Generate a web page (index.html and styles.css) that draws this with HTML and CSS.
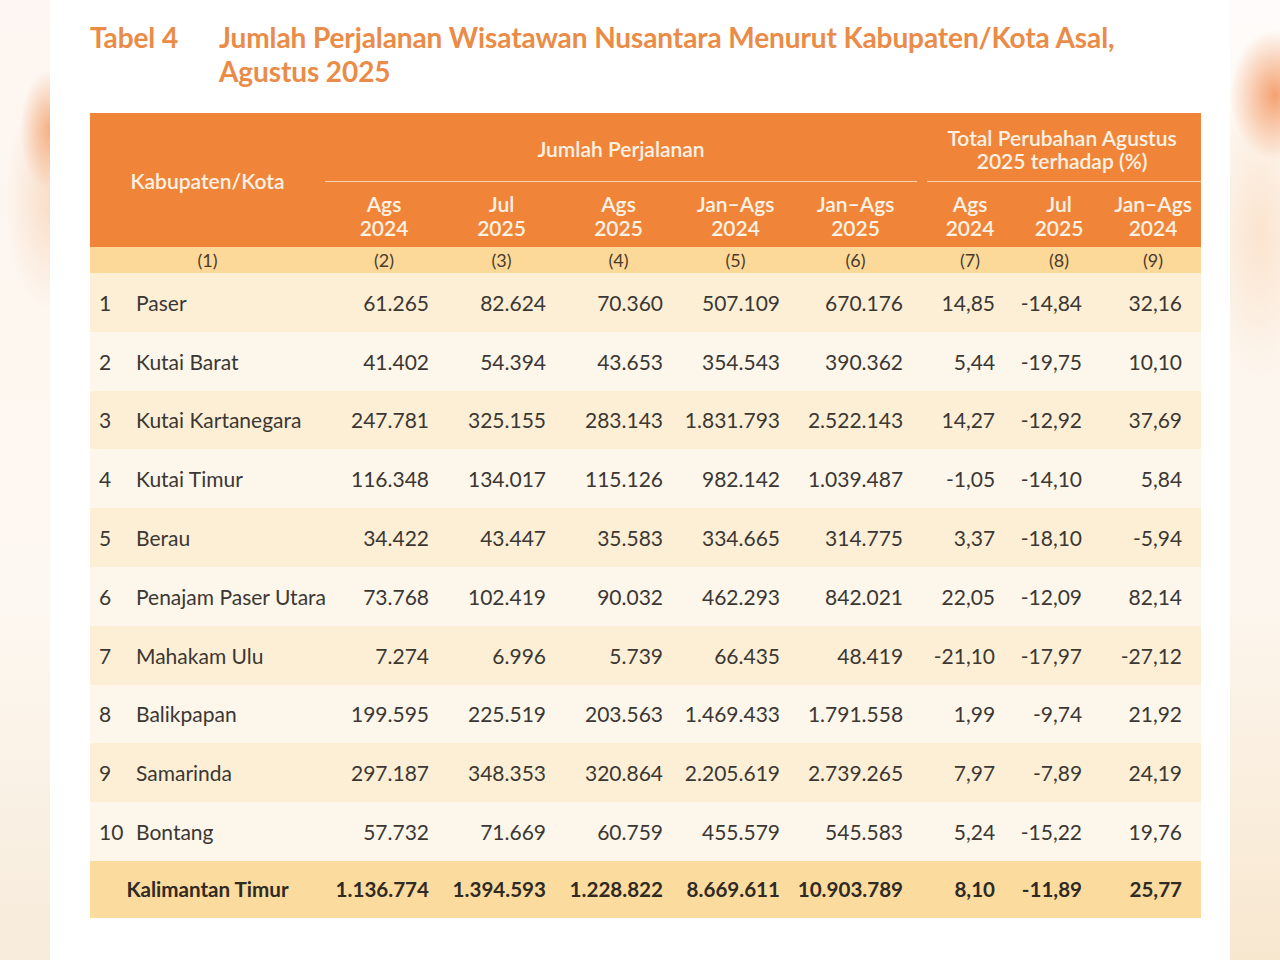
FILE: index.html
```html
<!DOCTYPE html>
<html lang="id">
<head>
<meta charset="utf-8">
<title>Tabel 4</title>
<link rel="stylesheet" href="styles.css">
</head>
<body>
<div class="edge edge-left"></div>
<main class="page">
  <h1 class="title">
    <span class="title-num">Tabel 4</span>
    <span class="title-text">Jumlah Perjalanan Wisatawan Nusantara Menurut Kabupaten/Kota Asal, Agustus 2025</span>
  </h1>
  <table class="data">
    <colgroup>
      <col class="w-no"><col class="w-name">
      <col class="w-c2"><col class="w-c3"><col class="w-c4"><col class="w-c5"><col class="w-c6">
      <col class="w-c7"><col class="w-c8"><col class="w-c9">
    </colgroup>
    <thead>
      <tr class="h1">
        <th colspan="2" rowspan="2" class="h-kab">Kabupaten/Kota</th>
        <th colspan="5" class="h-group"><div class="grp grp-a">Jumlah Perjalanan</div></th>
        <th colspan="3" class="h-group"><div class="grp grp-b">Total Perubahan Agustus<br>2025 terhadap (%)</div></th>
      </tr>
      <tr class="h2">
        <th>Ags<br>2024</th>
        <th>Jul<br>2025</th>
        <th>Ags<br>2025</th>
        <th>Jan–Ags<br>2024</th>
        <th>Jan–Ags<br>2025</th>
        <th class="p7">Ags<br>2024</th>
        <th class="p8">Jul<br>2025</th>
        <th class="p9">Jan–Ags<br>2024</th>
      </tr>
      <tr class="h3">
        <th colspan="2">(1)</th>
        <th>(2)</th><th>(3)</th><th>(4)</th><th>(5)</th><th>(6)</th>
        <th class="p7">(7)</th><th class="p8">(8)</th><th class="p9">(9)</th>
      </tr>
    </thead>
    <tbody>
      <tr><td class="no">1</td><td class="name">Paser</td><td>61.265</td><td>82.624</td><td>70.360</td><td>507.109</td><td>670.176</td><td class="p7">14,85</td><td class="p8">-14,84</td><td class="p9">32,16</td></tr>
      <tr><td class="no">2</td><td class="name">Kutai Barat</td><td>41.402</td><td>54.394</td><td>43.653</td><td>354.543</td><td>390.362</td><td class="p7">5,44</td><td class="p8">-19,75</td><td class="p9">10,10</td></tr>
      <tr><td class="no">3</td><td class="name">Kutai Kartanegara</td><td>247.781</td><td>325.155</td><td>283.143</td><td>1.831.793</td><td>2.522.143</td><td class="p7">14,27</td><td class="p8">-12,92</td><td class="p9">37,69</td></tr>
      <tr><td class="no">4</td><td class="name">Kutai Timur</td><td>116.348</td><td>134.017</td><td>115.126</td><td>982.142</td><td>1.039.487</td><td class="p7">-1,05</td><td class="p8">-14,10</td><td class="p9">5,84</td></tr>
      <tr><td class="no">5</td><td class="name">Berau</td><td>34.422</td><td>43.447</td><td>35.583</td><td>334.665</td><td>314.775</td><td class="p7">3,37</td><td class="p8">-18,10</td><td class="p9">-5,94</td></tr>
      <tr><td class="no">6</td><td class="name">Penajam Paser Utara</td><td>73.768</td><td>102.419</td><td>90.032</td><td>462.293</td><td>842.021</td><td class="p7">22,05</td><td class="p8">-12,09</td><td class="p9">82,14</td></tr>
      <tr><td class="no">7</td><td class="name">Mahakam Ulu</td><td>7.274</td><td>6.996</td><td>5.739</td><td>66.435</td><td>48.419</td><td class="p7">-21,10</td><td class="p8">-17,97</td><td class="p9">-27,12</td></tr>
      <tr><td class="no">8</td><td class="name">Balikpapan</td><td>199.595</td><td>225.519</td><td>203.563</td><td>1.469.433</td><td>1.791.558</td><td class="p7">1,99</td><td class="p8">-9,74</td><td class="p9">21,92</td></tr>
      <tr><td class="no">9</td><td class="name">Samarinda</td><td>297.187</td><td>348.353</td><td>320.864</td><td>2.205.619</td><td>2.739.265</td><td class="p7">7,97</td><td class="p8">-7,89</td><td class="p9">24,19</td></tr>
      <tr><td class="no">10</td><td class="name">Bontang</td><td>57.732</td><td>71.669</td><td>60.759</td><td>455.579</td><td>545.583</td><td class="p7">5,24</td><td class="p8">-15,22</td><td class="p9">19,76</td></tr>
    </tbody>
    <tfoot>
      <tr><td colspan="2" class="tot-name">Kalimantan Timur</td><td>1.136.774</td><td>1.394.593</td><td>1.228.822</td><td>8.669.611</td><td>10.903.789</td><td class="p7">8,10</td><td class="p8">-11,89</td><td class="p9">25,77</td></tr>
    </tfoot>
  </table>
</main>
<div class="edge edge-right"></div>
</body>
</html>
```

FILE: styles.css
```css
html, body {
  margin: 0;
  padding: 0;
}
body {
  display: flex;
  width: 1280px;
  height: 960px;
  overflow: hidden;
  font-family: Lato, "Open Sans", "Liberation Sans", sans-serif;
  background: #ffffff;
}
.edge {
  width: 50px;
  height: 960px;
  flex: none;
}
.edge-left {
  background:
    radial-gradient(ellipse 30px 60px at 50px 130px, rgba(240,150,90,0.7), rgba(240,150,90,0) 100%),
    radial-gradient(ellipse 45px 110px at 50px 200px, rgba(245,190,150,0.45), rgba(245,190,150,0) 100%),
    linear-gradient(to bottom, #fdf6f2 0px, #fdf7f0 300px, #fdf8f1 600px, #f7ebda 960px);
}
.edge-right {
  background:
    radial-gradient(ellipse 45px 65px at 45px 95px, rgba(242,140,80,0.8), rgba(242,140,80,0) 100%),
    radial-gradient(ellipse 55px 150px at 30px 230px, rgba(248,200,160,0.4), rgba(248,200,160,0) 100%),
    linear-gradient(to bottom, #fefcfa 0px, #fdf6ee 260px, #fcf6ee 600px, #f8e7cf 960px);
}
.page {
  flex: none;
  width: 1180px;
  padding: 20px 0 0 40px;
  box-sizing: border-box;
  background: #ffffff;
}
.title {
  display: flex;
  margin: 0 0 25px 0;
  font-size: 28px;
  line-height: 34px;
  font-weight: 700;
  color: #ea8b47;
  letter-spacing: -0.1px;
}
.title-num {
  flex: none;
  width: 129px;
}
.title-text {
  width: 940px;
}
.data {
  border-collapse: collapse;
  table-layout: fixed;
  width: 1111px;
  color: #3b3733;
  font-size: 21px;
}
.w-no { width: 35px; }
.w-name { width: 200px; }
.w-c2 { width: 118px; }
.w-c3 { width: 117px; }
.w-c4 { width: 117px; }
.w-c5 { width: 117px; }
.w-c6 { width: 123px; }
.w-c7 { width: 96px; }
.w-c8 { width: 92px; }
.w-c9 { width: 96px; }

thead th {
  background: #f0853a;
  color: #fdf2e4;
  font-weight: 600;
  font-size: 21px;
  padding: 0;
  text-align: center;
}
.h1 th.h-group {
  height: 69px;
  vertical-align: bottom;
}
.grp {
  display: flex;
  align-items: center;
  justify-content: center;
  height: 68px;
  padding-top: 2px;
  box-sizing: border-box;
  border-bottom: 1.5px solid #f9d2b0;
  line-height: 23px;
}
.grp-b {
  margin-left: 10px;
  padding-right: 4px;
}
.h-kab {
  vertical-align: middle;
}
.h2 th {
  height: 62px;
  padding-top: 3px;
  line-height: 24px;
  vertical-align: middle;
}
.h3 th {
  background: #fcd899;
  color: #4a3b2c;
  font-weight: 400;
  font-size: 18px;
  height: 26px;
  line-height: 26px;
}
.h2 th.p7, .h3 th.p7 { padding-left: 10px; }

tbody td, tfoot td {
  height: 58.8px;
  padding: 0 14px 0 0;
  text-align: right;
  vertical-align: middle;
  white-space: nowrap;
}
tbody tr:nth-child(odd) td { background: #fdefd6; }
tbody tr:nth-child(even) td { background: #fdf6eb; }
tbody td.no {
  text-align: left;
  padding: 0 0 0 9px;
}
tbody td.name {
  text-align: left;
  padding: 0 0 0 11px;
}
td.p7 { padding-right: 18px; }
td.p8 { padding-right: 23px; }
td.p9 { padding-right: 19px; }

tfoot td {
  background: #fcdb9e;
  font-weight: 700;
  color: #2f2a24;
  height: 57px;
  font-size: 20.6px;
}
tfoot td.tot-name {
  text-align: center;
  padding: 0;
}
```
